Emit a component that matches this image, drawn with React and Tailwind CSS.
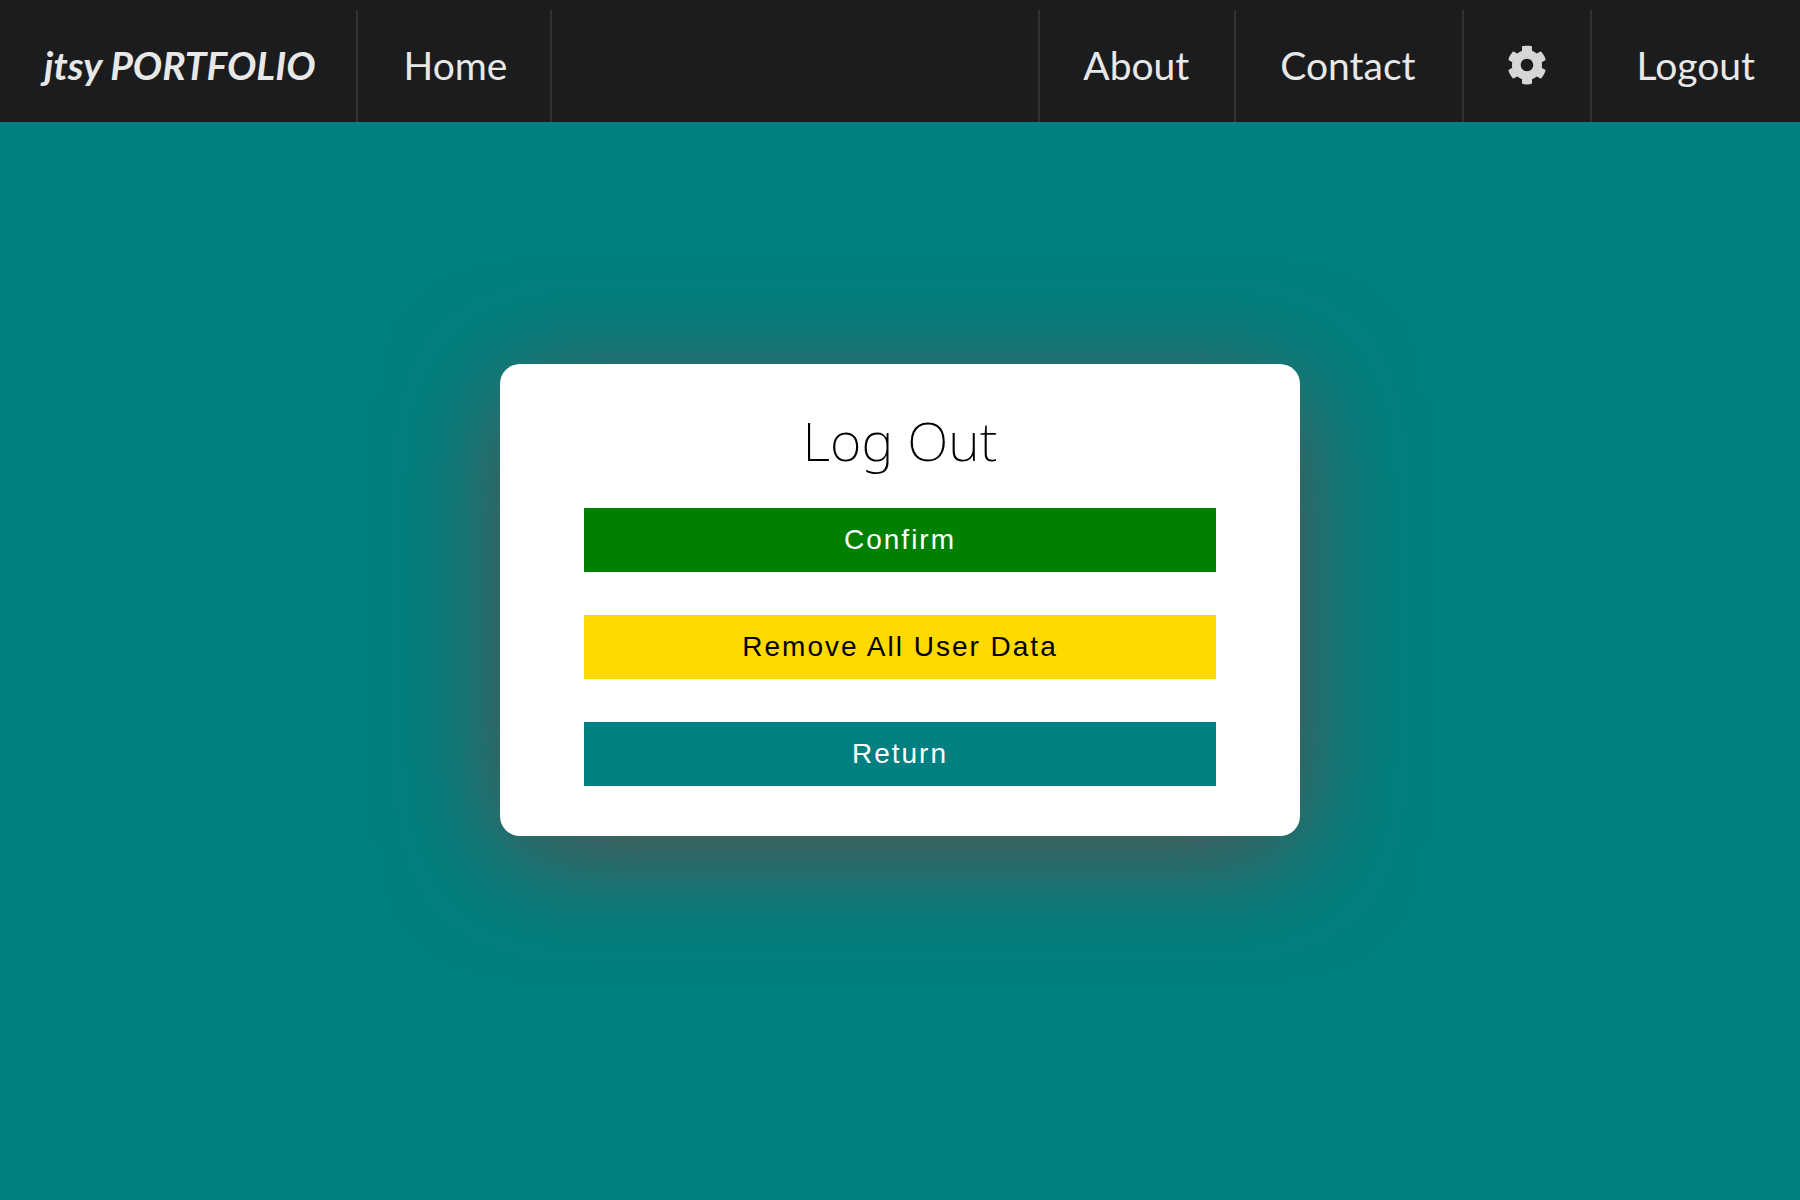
import { FaCog } from "react-icons/fa";

const navItem =
  "flex items-center justify-center border-[#303133] pb-[2px] text-[39px] leading-[40px] text-[#e8e8e8]";

const actions = [
  { label: "Confirm", style: "bg-[#008000] text-white" },
  { label: "Remove All User Data", style: "bg-[#ffd900] text-black" },
  { label: "Return", style: "bg-[#008080] text-white" },
];

export default function App() {
  return (
    <div className="flex min-h-screen flex-col bg-[#008080]">
      <nav className="flex h-[122px] items-stretch bg-[#1b1c1d] pt-[10px] font-['Lato',sans-serif]">
        <a href="#top" className={`${navItem} border-r-2 pr-[40px] pl-[44px] font-bold italic`}>
          jtsy PORTFOLIO
        </a>
        <a href="#home" className={`${navItem} border-r-2 pr-[43px] pl-[46px]`}>
          Home
        </a>
        <div className="ml-auto flex items-stretch">
          <a href="#about" className={`${navItem} border-l-2 pr-[45px] pl-[43px]`}>
            About
          </a>
          <a href="#contact" className={`${navItem} border-l-2 pr-[46px] pl-[44px]`}>
            Contact
          </a>
          <button type="button" aria-label="Settings" className={`${navItem} border-l-2 px-[43px]`}>
            <FaCog className="size-[40px] text-[#d6d6d6]" />
          </button>
          <a href="#logout" className={`${navItem} border-l-2 px-[45px]`}>
            Logout
          </a>
        </div>
      </nav>

      <main className="flex flex-1 items-start justify-center pt-[242px]">
        <section className="w-4/9 rounded-[20px] bg-white px-[84px] pt-[38px] pb-[50px] shadow-[0_20px_112px_#5c504e]">
          <h1 className="mb-[30px] text-center font-['Noto_Sans',sans-serif] text-[54px] leading-[76px] font-extralight text-black">
            Log Out
          </h1>
          <div className="flex flex-col gap-[43px] font-['Liberation_Sans',Arial,sans-serif]">
            {actions.map((action) => (
              <button
                key={action.label}
                type="button"
                className={`h-16 w-full text-[28px] leading-[32px] tracking-[2px] ${action.style}`}
              >
                {action.label}
              </button>
            ))}
          </div>
        </section>
      </main>
    </div>
  );
}
